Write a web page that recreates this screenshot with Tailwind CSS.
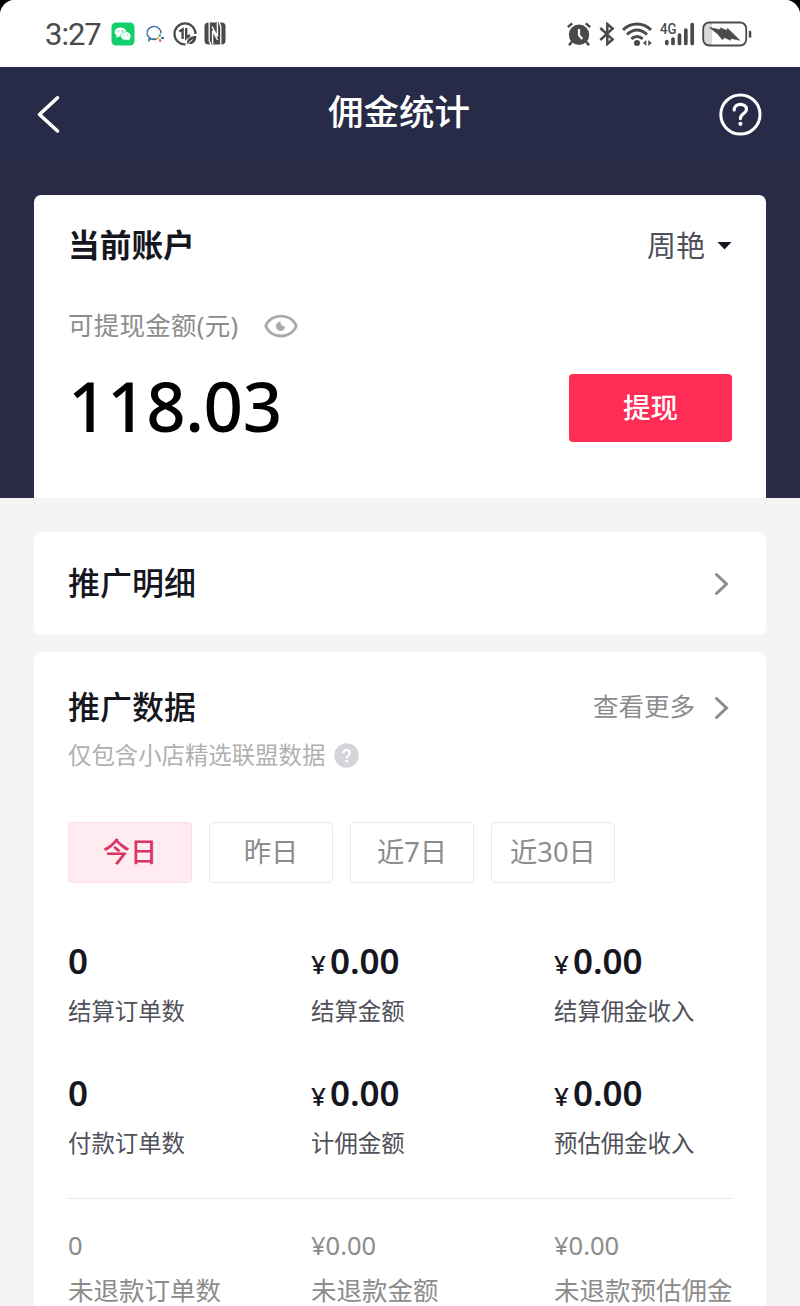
<!DOCTYPE html>
<html lang="zh-CN">
<head>
  <meta charset="UTF-8">
  <meta name="viewport" content="width=device-width, initial-scale=1.0">
  <title>佣金统计</title>
  <script src="https://cdn.jsdelivr.net/npm/@tailwindcss/browser@4"></script>
</head>
<body class="bg-black font-['Noto_Sans','Noto_Sans_CJK_SC',sans-serif] text-[#16161f]">
  <div class="h-[1306px] w-[800px] overflow-hidden bg-[#f4f4f4] rounded-t-[15px]">

    <!-- status bar -->
    <div class="flex h-[67px] items-center justify-between bg-white pl-[45px] pr-[48px] text-[#4a4a4a]">
      <div class="flex items-center">
        <span class="w-[66px] pt-[2px] font-['Roboto'] text-[31px] leading-none tracking-[-1px]">3:27</span>
        <svg class="h-6 w-6" viewBox="0 0 24 24">
          <rect x="0.5" y="0.5" width="23" height="23" rx="4.5" fill="#10cf6c"/>
          <ellipse cx="9.5" cy="10" rx="5.9" ry="4.6" fill="#fff"/>
          <path d="M5.5 13.2L5.2 16L8.5 14.2Z" fill="#fff"/>
          <ellipse cx="14.8" cy="14" rx="5.2" ry="4.2" fill="#fff" stroke="#10cf6c" stroke-width="0.6"/>
          <path d="M16.5 17L18.6 18.8L18.5 16Z" fill="#fff"/>
          <g fill="#10cf6c"><circle cx="7.6" cy="8.8" r="0.7"/><circle cx="11.6" cy="8.8" r="0.7"/><circle cx="13.1" cy="13" r="0.6"/><circle cx="16.5" cy="13" r="0.6"/></g>
        </svg>
        <svg class="ml-[10px] h-5 w-5" viewBox="0 0 20 20" fill="none">
          <path d="M16 9.5A7 6.5 0 1 0 11.5 15L5.5 14.8L4 16.5L4.2 13.5" stroke="#3c71a8" stroke-width="1.4"/>
          <path d="M14.8 10.2V12.8" stroke="#3aa58e" stroke-width="2"/>
          <path d="M16.3 14H19" stroke="#3c71a8" stroke-width="2"/>
          <path d="M15.2 15.3V17.8" stroke="#e5543f" stroke-width="2"/>
          <path d="M11.5 14.2H14.2" stroke="#efb52b" stroke-width="2"/>
        </svg>
        <svg class="ml-[8px] h-6 w-6" viewBox="0 0 24 24" fill="none" stroke="currentColor">
          <path d="M12.5 22.4A10.5 10.5 0 1 1 22.5 12" stroke-width="2.2"/>
          <path d="M6.3 9.5L9.6 7.5V17M13.2 6V16L17 13" stroke-width="2.4"/>
          <path d="M14 22C13.5 16 18 14 23.4 14C23.4 20 19.5 23.5 14.5 21.5Z" fill="currentColor" stroke="none"/>
          <path d="M15.2 21.3L19.5 17.6" stroke="#fff" stroke-width="1"/>
        </svg>
        <svg class="ml-[7px] h-[23px] w-[22px]" viewBox="0 0 22 23">
          <rect x="0.5" y="0.5" width="21" height="22" rx="4" fill="currentColor"/>
          <path d="M5.2 0V18.5L7 23M16.8 23V4.5L15 0" fill="none" stroke="#fff" stroke-width="1.3"/>
          <path d="M8.6 22V8.5L13.6 18M13.4 1V14.5L8 4.5" fill="none" stroke="#fff" stroke-width="1.4"/>
        </svg>
      </div>

      <div class="flex items-center">
        <svg class="h-6 w-6" viewBox="0 0 24 24" fill="none" stroke="currentColor">
          <circle cx="12" cy="12.8" r="10.2" fill="currentColor" stroke="none"/>
          <path d="M5 19.5L2 23.3M19 19.5L22 23.3" stroke-width="2.5"/>
          <path d="M0.8 5.2L5.2 1.4M23.2 5.2L18.8 1.4" stroke-width="2.4"/>
          <path d="M12 7V13.2L15.3 17" stroke="#fff" stroke-width="2.2"/>
        </svg>
        <svg class="ml-[8px] h-6 w-4" viewBox="0 0 16 24" fill="none" stroke="currentColor" stroke-width="2.5">
          <path d="M1.3 6L13.6 17.4L8.3 22V2L13.6 6.6L1.3 18"/>
        </svg>
        <svg class="ml-[7px] h-6 w-[31px]" viewBox="0 0 31 24" fill="none" stroke="currentColor" stroke-width="3">
          <path d="M1 7.8C9.5 0 20.5 0 29 7.8M5 12.5C11.5 6.7 18.5 6.7 25 12.5M9.3 16.9C13 13.8 17 13.8 20.7 16.9"/>
          <circle cx="15" cy="21" r="3" fill="currentColor" stroke="none"/>
          <path d="M21 21L24.3 18V24ZM29.8 21L26.3 18V24Z" fill="currentColor" stroke="none"/>
        </svg>
        <svg class="ml-[7px] h-6 w-[35px]" viewBox="0 0 35 24">
          <text x="0" y="11.6" textLength="16.5" lengthAdjust="spacingAndGlyphs" font-family="Roboto" font-size="15.5" font-weight="500" fill="currentColor">4G</text>
          <path d="M6.8 19.5V21.5M13 17V21.5M19.5 13V21.5M25.8 8V21.5M32.2 2.5V21.5" stroke="currentColor" stroke-width="3.7" stroke-linecap="round"/>
        </svg>
        <svg class="ml-[7px] h-[26px] w-[50px]" viewBox="0 0 50 26">
          <path d="M6 2H10V24H6Q2 24 2 19V7Q2 2 6 2Z" fill="#d9d9d9"/>
          <rect x="1.2" y="1.5" width="43" height="23" rx="6" fill="none" stroke="currentColor" stroke-width="1.8"/>
          <path d="M7.5 6.5L18.2 8.8L18.5 6.8L25 9.6L25.5 7.2L37.8 19.3L29 17.4L28.5 19.3L22.5 16.6L20.5 18.8L15.5 12.8Z" fill="currentColor" stroke="currentColor" stroke-width="0.6" stroke-linejoin="round"/>
          <rect x="46.8" y="9.7" width="2.5" height="7" rx="1" fill="currentColor"/>
        </svg>
      </div>
    </div>

    <!-- header + balance -->
    <div class="h-[431px] bg-[#2a2b47] px-[34px]">
      <div class="-mx-[34px] flex h-[96px] items-center justify-between bg-[#282b47] pl-[36px] pr-[38px]">
        <svg class="h-10 w-[44px]" viewBox="0 0 44 40" fill="none" stroke="#fff" stroke-width="3.6" stroke-linecap="round" stroke-linejoin="round">
          <path d="M21.5 2.8L3.5 19.5L21.5 36"/>
        </svg>
        <h1 class="pb-[6px] text-[35.5px] font-medium leading-none text-white">佣金统计</h1>
        <svg class="h-11 w-11" viewBox="0 0 44 44" fill="none" stroke="#fff" stroke-width="3">
          <circle cx="22.4" cy="21.5" r="19.6"/>
          <path d="M16.2 17C16.2 9.2 28.5 9.7 28.5 16.5C28.5 20.6 22.4 20.6 22.4 25.6" stroke-width="3.2" stroke-linecap="round"/>
          <circle cx="22.4" cy="30.8" r="2.1" fill="#fff" stroke="none"/>
        </svg>
      </div>

      <div class="mt-[32px] h-[303px] rounded-t-[7px] bg-white px-[34px] pt-[30px]">
        <div class="flex h-10 items-center justify-between">
          <h2 class="text-[31.7px] font-bold leading-none">当前账户</h2>
          <div class="flex items-center text-[29px] leading-none text-[#50505a]">
            周艳
            <svg class="ml-[12px] h-[9px] w-[15px]" viewBox="0 0 15 9"><path d="M0.5 1H14.5L7.5 8.5Z" fill="#16161f"/></svg>
          </div>
        </div>
        <div class="mt-[40px] flex h-[42px] items-center text-[25.5px] leading-none text-[#8c8c8c]">
          <span class="w-[194px] pb-[1px] tracking-[0.25px]">可提现金额(元)</span>
          <svg class="h-[26px] w-[36px]" viewBox="0 0 36 26">
            <path d="M3.7 13C9 -0.3 29 -0.3 34.3 13C29 26.3 9 26.3 3.7 13Z" fill="none" stroke="#aaa" stroke-width="2.8"/>
            <path d="M18.5 8.5A4.7 4.7 0 1 0 23.3 13.5A4.4 4.4 0 0 1 18.5 8.5Z" fill="#aaa"/>
          </svg>
        </div>
        <div class="mt-[27px] flex h-[68px] items-center justify-between">
          <div class="pb-[6px] text-[69px] font-medium leading-none tracking-[-0.4px] text-black">118.03</div>
          <button class="h-[68px] w-[163px] rounded-[4px] bg-[#ff2c55] text-[27.5px] font-medium leading-none text-white">提现</button>
        </div>
      </div>
    </div>

    <!-- details link -->
    <div class="mx-[34px] mt-[34px] flex h-[103px] items-center justify-between rounded-[7px] bg-white pl-[34px] pr-[36px]">
      <h2 class="pb-[2px] text-[32px] font-medium leading-none">推广明细</h2>
      <svg class="h-6 w-[17px]" viewBox="0 0 17 24" fill="none" stroke="#8a8a8a" stroke-width="3" stroke-linecap="round"><path d="M3.5 2.5L13.5 12L3.5 21.5"/></svg>
    </div>

    <!-- promotion data -->
    <div class="mx-[34px] mt-[17px] h-[700px] rounded-t-[7px] bg-white px-[34px] pt-[36px]">
      <div class="flex h-10 items-center justify-between pr-[2px]">
        <h2 class="pb-[2px] text-[32px] font-medium leading-none">推广数据</h2>
        <div class="flex items-center text-[25.5px] leading-none text-[#8c8c8c]">
          <span class="pb-[2px]">查看更多</span>
          <svg class="ml-[18px] h-6 w-[17px]" viewBox="0 0 17 24" fill="none" stroke="#8a8a8a" stroke-width="3" stroke-linecap="round"><path d="M3.5 2.5L13.5 12L3.5 21.5"/></svg>
        </div>
      </div>
      <div class="mt-[11px] flex h-8 items-center text-[23.4px] leading-none text-[#b0b0b0]">
        <span class="pt-px">仅包含小店精选联盟数据</span>
        <svg class="ml-[9px] h-[25px] w-[25px]" viewBox="0 0 25 25" fill="none">
          <circle cx="12.5" cy="12.5" r="12.2" fill="#d5d5d9"/>
          <path d="M9.4 10.3C9.4 5.8 15.8 6.2 15.8 10C15.8 12.5 12.6 12.5 12.6 15.3" stroke="#fff" stroke-width="2.2"/>
          <circle cx="12.6" cy="18.2" r="1.4" fill="#fff"/>
        </svg>
      </div>

      <div class="mt-[51px] flex gap-[17px] text-[27.3px] leading-none text-[#8c8c8c]">
        <div class="flex h-[61px] w-[124px] items-center justify-center rounded-[4px] border border-[#fbdde3] bg-[#ffecf0] pb-[2px] font-medium text-[#d93568]">今日</div>
        <div class="flex h-[61px] w-[124px] items-center justify-center rounded-[4px] border border-[#e8e8e8] pb-[2px]">昨日</div>
        <div class="flex h-[61px] w-[124px] items-center justify-center rounded-[4px] border border-[#e8e8e8] pb-[2px]">近7日</div>
        <div class="flex h-[61px] w-[124px] items-center justify-center rounded-[4px] border border-[#e8e8e8] pb-[2px]">近30日</div>
      </div>

      <div class="mt-[58px] grid grid-cols-[243px_243px_1fr] gap-y-[32px] whitespace-nowrap text-[23.4px] leading-[30px] text-[#50505a]">
        <div>
          <div class="mb-[15px] h-[40px] text-[35px] font-semibold leading-[40px] text-[#16161f]">0</div>
          <div class="h-[45px]">结算订单数</div>
        </div>
        <div>
          <div class="mb-[15px] h-[40px] text-[35px] font-semibold leading-[40px] text-[#16161f]"><span class="mr-[4px] text-[26px] font-medium">¥</span>0.00</div>
          <div>结算金额</div>
        </div>
        <div>
          <div class="mb-[15px] h-[40px] text-[35px] font-semibold leading-[40px] text-[#16161f]"><span class="mr-[4px] text-[26px] font-medium">¥</span>0.00</div>
          <div>结算佣金收入</div>
        </div>
        <div>
          <div class="mb-[15px] h-[40px] text-[35px] font-semibold leading-[40px] text-[#16161f]">0</div>
          <div>付款订单数</div>
        </div>
        <div>
          <div class="mb-[15px] h-[40px] text-[35px] font-semibold leading-[40px] text-[#16161f]"><span class="mr-[4px] text-[26px] font-medium">¥</span>0.00</div>
          <div>计佣金额</div>
        </div>
        <div>
          <div class="mb-[15px] h-[40px] text-[35px] font-semibold leading-[40px] text-[#16161f]"><span class="mr-[4px] text-[26px] font-medium">¥</span>0.00</div>
          <div>预估佣金收入</div>
        </div>
      </div>

      <div class="mt-[40px] grid grid-cols-[243px_243px_1fr] whitespace-nowrap border-t border-[#e8e8e8] pt-[31px] text-[25.5px] leading-[30px] text-[#8c8c8c]">
        <div><div class="mb-[15px]">0</div><div>未退款订单数</div></div>
        <div><div class="mb-[15px]">¥0.00</div><div>未退款金额</div></div>
        <div><div class="mb-[15px]">¥0.00</div><div>未退款预估佣金</div></div>
      </div>
    </div>
  </div>
</body>
</html>
